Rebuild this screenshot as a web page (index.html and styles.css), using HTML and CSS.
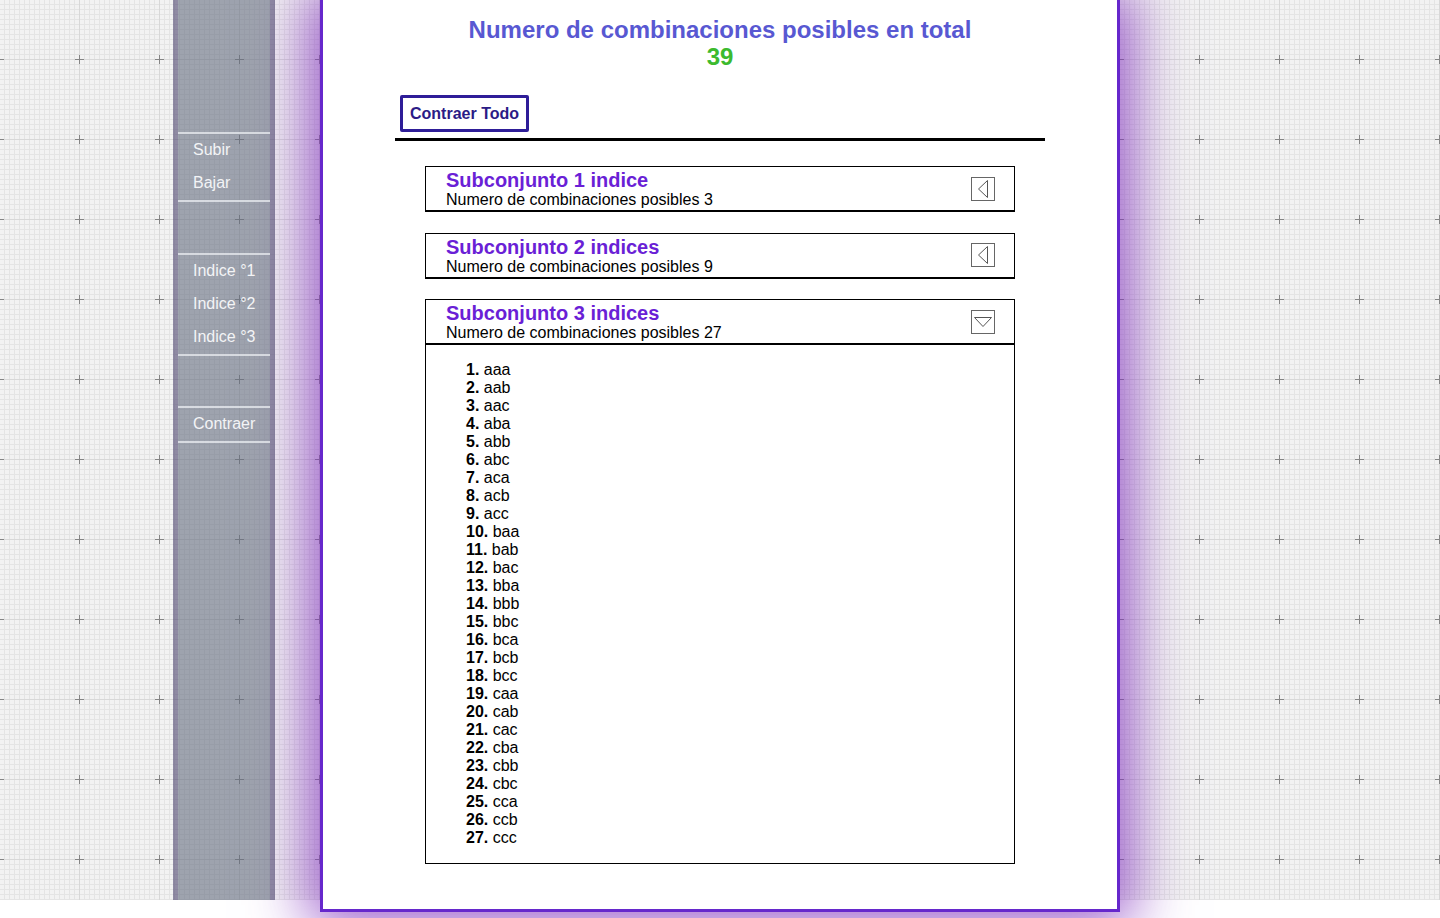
FILE: index.html
```html
<!DOCTYPE html>
<html lang="es">
<head>
<meta charset="utf-8">
<title>Combinaciones</title>
<link rel="stylesheet" href="styles.css">
</head>
<body>
<div class="page">
  <nav class="sidebar">
    <div class="group">
      <div class="item">Subir</div>
      <div class="item">Bajar</div>
    </div>
    <div class="group">
      <div class="item">Indice °1</div>
      <div class="item">Indice °2</div>
      <div class="item">Indice °3</div>
    </div>
    <div class="group">
      <div class="item">Contraer</div>
    </div>
  </nav>
  <main class="panel">
    <div class="heading">
      <div class="heading-title">Numero de combinaciones posibles en total</div>
      <div class="heading-count">39</div>
    </div>
    <div class="toolbar">
      <button class="btn">Contraer Todo</button>
    </div>
    <div class="rule"></div>
    <div class="cards">
      <section class="card">
        <div class="card-head">
          <div class="card-text">
            <div class="card-title">Subconjunto 1 indice</div>
            <div class="card-sub">Numero de combinaciones posibles 3</div>
          </div>
          <svg class="toggle" width="24" height="24" viewBox="0 0 24 24"><rect x="0.5" y="0.5" width="23" height="23" fill="none" stroke="#666" stroke-width="1"/><path d="M16.5 3.5 V20.5 L7.5 12 Z" fill="none" stroke="#555" stroke-width="1" stroke-linejoin="miter"/></svg>
        </div>
      </section>
      <section class="card">
        <div class="card-head">
          <div class="card-text">
            <div class="card-title">Subconjunto 2 indices</div>
            <div class="card-sub">Numero de combinaciones posibles 9</div>
          </div>
          <svg class="toggle" width="24" height="24" viewBox="0 0 24 24"><rect x="0.5" y="0.5" width="23" height="23" fill="none" stroke="#666" stroke-width="1"/><path d="M16.5 3.5 V20.5 L7.5 12 Z" fill="none" stroke="#555" stroke-width="1"/></svg>
        </div>
      </section>
      <section class="card">
        <div class="card-head">
          <div class="card-text">
            <div class="card-title">Subconjunto 3 indices</div>
            <div class="card-sub">Numero de combinaciones posibles 27</div>
          </div>
          <svg class="toggle" width="24" height="24" viewBox="0 0 24 24"><rect x="0.5" y="0.5" width="23" height="23" fill="none" stroke="#666" stroke-width="1"/><path d="M3.5 7.5 H20.5 L12 16.5 Z" fill="none" stroke="#555" stroke-width="1"/></svg>
        </div>
        <div class="card-body">
          <ol class="combos">
            <li>aaa</li><li>aab</li><li>aac</li><li>aba</li><li>abb</li><li>abc</li><li>aca</li><li>acb</li><li>acc</li>
            <li>baa</li><li>bab</li><li>bac</li><li>bba</li><li>bbb</li><li>bbc</li><li>bca</li><li>bcb</li><li>bcc</li>
            <li>caa</li><li>cab</li><li>cac</li><li>cba</li><li>cbb</li><li>cbc</li><li>cca</li><li>ccb</li><li>ccc</li>
          </ol>
        </div>
      </section>
    </div>
  </main>
</div>
</body>
</html>
```

FILE: styles.css
```css
html, body {
  margin: 0;
  padding: 0;
  background: #ffffff;
  font-family: "Liberation Sans", Arial, sans-serif;
}

body {
  height: 918px;
  overflow: hidden;
}

.page {
  height: 900px;
  display: flex;
  align-items: flex-start;
  padding-left: 173px;
  background-color: #f2f2f2;
  background-image:
    url("data:image/svg+xml,%3Csvg xmlns='http://www.w3.org/2000/svg' width='80' height='80'%3E%3Cpath d='M36 40.5H45M40.5 36V45' stroke='%23858585' stroke-width='1' fill='none'/%3E%3C/svg%3E"),
    linear-gradient(to bottom, #d8d8d8 1px, transparent 1px),
    linear-gradient(to right, #d8d8d8 1px, transparent 1px),
    linear-gradient(to bottom, #e4e4e4 1px, transparent 1px),
    linear-gradient(to right, #e4e4e4 1px, transparent 1px);
  background-size: 80px 80px, 80px 80px, 80px 80px, 5px 5px, 5px 5px;
  background-position: 39px 19px, 0 59px, 79px 0, 4px 4px, 4px 4px;
}

.sidebar {
  box-sizing: border-box;
  width: 102px;
  height: 900px;
  flex: none;
  padding-top: 132px;
  background-color: rgba(102, 110, 129, 0.6);
  background-clip: padding-box;
  border-left: 5px solid rgba(70, 62, 105, 0.58);
  border-right: 5px solid rgba(70, 62, 105, 0.58);
  position: relative;
  z-index: 3;
}

.group {
  border-top: 2px solid rgba(235, 238, 242, 0.75);
  border-bottom: 2px solid rgba(235, 238, 242, 0.75);
  margin-bottom: 50.5px;
}

.item {
  height: 33px;
  line-height: 31px;
  padding-left: 15px;
  font-size: 16px;
  color: #f3f4f6;
}

.panel {
  box-sizing: border-box;
  width: 800px;
  height: 912px;
  flex: none;
  margin-left: 45px;
  background: #ffffff;
  border: 3px solid #6628cc;
  border-top: none;
  box-shadow: 0 0 55px 12px rgba(130, 50, 190, 0.8);
  position: relative;
  z-index: 2;
}

.heading {
  padding-top: 16px;
  text-align: center;
  font-weight: bold;
  font-size: 24px;
  line-height: 27px;
}

.heading-title {
  color: #5858d2;
}

.heading-count {
  color: #3cba2e;
}

.toolbar {
  width: 650px;
  margin: 25px auto 0;
}

.btn {
  margin-left: 5px;
  padding: 6px 7px;
  font-family: "Liberation Sans", Arial, sans-serif;
  font-size: 16px;
  font-weight: bold;
  line-height: 19px;
  color: #2b1b86;
  background: #ffffff;
  border: 3px solid #2e1d98;
  border-radius: 2px;
}

.rule {
  width: 650px;
  height: 3px;
  margin: 6px auto 0;
  background: #000000;
}

.cards {
  width: 590px;
  margin: 25px auto 0;
}

.card {
  border: 1px solid #000000;
  border-bottom: none;
  margin-bottom: 20.5px;
}

.card-head {
  display: flex;
  align-items: center;
  justify-content: space-between;
  padding: 2px 19px 2px 20px;
  border-bottom: 2px solid #000000;
}

.card-title {
  font-size: 20px;
  line-height: 22px;
  font-weight: bold;
  color: #6a1fd6;
}

.card-sub {
  font-size: 16px;
  line-height: 17px;
  color: #000000;
}

.toggle {
  display: block;
  flex: none;
}

.card-body {
  border-bottom: 1px solid #000000;
}

.combos {
  list-style: none;
  margin: 0;
  padding: 16px 0 16px 40px;
  counter-reset: combo;
}

.combos li {
  counter-increment: combo;
  font-size: 16px;
  line-height: 18px;
  color: #000000;
}

.combos li::before {
  content: counter(combo) ". ";
  font-weight: bold;
}
```
